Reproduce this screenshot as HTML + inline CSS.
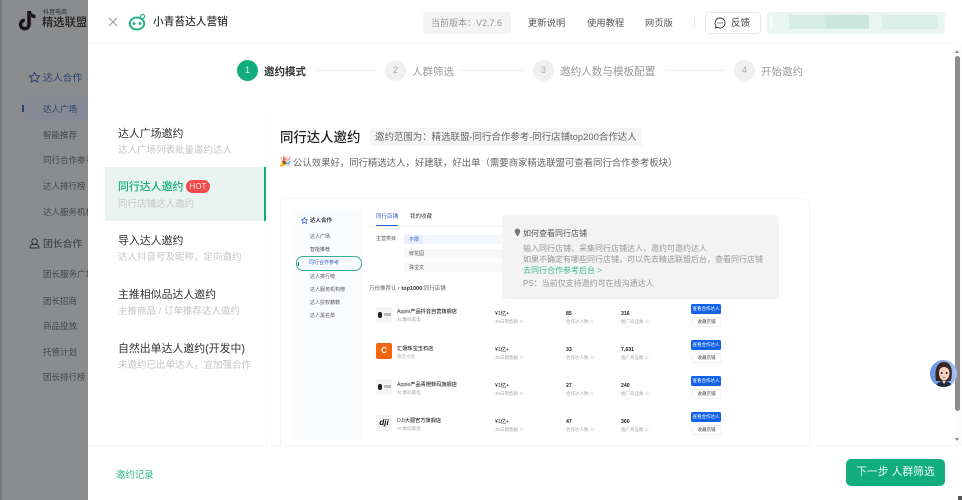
<!DOCTYPE html>
<html lang="zh"><head><meta charset="utf-8">
<style>
*{box-sizing:border-box;margin:0;padding:0}
html,body{width:962px;height:500px;overflow:hidden;background:#8b8c8e}
body{position:relative;font-family:"Liberation Sans","Noto Sans CJK SC",sans-serif;color:#333}
.a,.t{position:absolute}
.t{white-space:nowrap;line-height:1.2}
.nav{font-size:8.5px;color:#45474b}
.blue{color:#2c4170}
.menu{font-size:10.900px;color:#333}
.sub{font-size:9.500px;color:#c4c4c4}
.top{font-size:9.300px;color:#555}
.step{font-size:10.500px;color:#9a9a9a}
.num{width:21px;height:21px;border-radius:50%;background:#f0f0f0;color:#aaa;font-size:9px;text-align:center;line-height:21px}
.line{height:1px;background:#eeeeee}
.m{font-size:5px;color:#555}
.s{font-size:4.500px;color:#aaa}
.b{font-size:5.200px;color:#222;font-weight:bold}
.btn{left:691px;width:30px;height:10px;border-radius:1.500px;background:#1463e6;color:#fff;font-size:4.500px;line-height:10px;text-align:center}
.btn2{left:692px;width:29px;height:10px;border-radius:1.500px;background:#fff;border:1px solid #eee;color:#444;font-size:4.500px;line-height:8px;text-align:center}
.logo{left:376px;width:16px;height:16px;border-radius:2px;background:#f4f4f4}
</style></head>
<body>
<!-- background page -->
<div class="a" style="left:0;top:0;width:88px;height:500px;background:#8b8c8e"></div>
<div class="a" style="left:0;top:0;width:2px;height:500px;background:#77787a"></div>
<svg class="a" style="left:18px;top:9px" width="20" height="23" viewBox="0 0 20 23"><path d="M11 2v13.500a4.200 4.200 0 1 1-4.200-4.200" fill="none" stroke="#16161a" stroke-width="3.500"/><path d="M11 2c.5 3.500 3.500 5.500 6.500 5.500" fill="none" stroke="#16161a" stroke-width="3.500"/><path d="M12.800 4v11.500" stroke="#7d3444" stroke-width=".7"/></svg>
<div class="t" style="left:43px;top:10px;font-size:6px;color:#2a2a2c">抖音电商</div>
<div class="t" style="left:42px;top:17px;font-size:11.300px;color:#222;font-weight:500">精选联盟</div>
<svg class="a" style="left:28px;top:71px" width="13" height="13" viewBox="0 0 13 13"><path d="M6.500 1.500l1.500 3 3.500.5-2.500 2.500.6 3.500-3.100-1.700-3.100 1.700.6-3.500L1.500 5 5 4.500z" fill="none" stroke="#2c4170" stroke-width="1"/></svg>
<div class="t blue" style="left:43px;top:73px;font-size:9.800px">达人合作</div>
<div class="a" style="left:23px;top:97px;width:65px;height:23px;background:#868a94"></div>
<div class="a" style="left:22px;top:105px;width:2px;height:7px;background:#2c4170"></div>
<div class="t blue" style="left:43px;top:104px;font-size:8.500px">达人广场</div>
<div class="t nav" style="left:43px;top:130px">智能推荐</div>
<div class="t nav" style="left:43px;top:155px;width:45px;overflow:hidden">同行合作参考</div>
<div class="t nav" style="left:43px;top:181px">达人排行榜</div>
<div class="t nav" style="left:43px;top:207px;width:45px;overflow:hidden">达人服务机构</div>
<svg class="a" style="left:28px;top:237px" width="13" height="13" viewBox="0 0 13 13"><circle cx="6.500" cy="4.500" r="2.800" fill="none" stroke="#333" stroke-width="1"/><path d="M2 11c0-2 1-3.500 2.500-3.500h4C10 7.500 11 9 11 11z" fill="none" stroke="#333" stroke-width="1"/></svg>
<div class="t" style="left:43px;top:239px;font-size:9.800px;color:#35373a">团长合作</div>
<div class="t nav" style="left:43px;top:269px;width:45px;overflow:hidden">团长服务广场</div>
<div class="t nav" style="left:43px;top:296px">团长招商</div>
<div class="t nav" style="left:43px;top:321px">商品投放</div>
<div class="t nav" style="left:43px;top:347px">托管计划</div>
<div class="t nav" style="left:43px;top:372px">团长排行榜</div>

<!-- drawer -->
<div class="a" style="left:88px;top:0;width:874px;height:500px;background:#fff"></div>
<div class="a" style="left:88px;top:43px;width:874px;height:1px;background:#f5f5f5"></div>

<svg class="a" style="left:107px;top:16px" width="12" height="12" viewBox="0 0 12 12"><path d="M2 2l8 8M10 2l-8 8" stroke="#999" stroke-width="1"/></svg>
<svg class="a" style="left:128px;top:13px" width="19" height="18" viewBox="0 0 19 18"><ellipse cx="9" cy="10.500" rx="7.200" ry="6" fill="#fff" stroke="#25b488" stroke-width="2"/><circle cx="14.500" cy="3.500" r="2" fill="#fff" stroke="#25b488" stroke-width="1.200"/><circle cx="6" cy="10.500" r="1.500" fill="#25b488"/><circle cx="12" cy="10.500" r="1.500" fill="#25b488"/></svg>
<div class="t" style="left:153px;top:16px;font-size:10.700px;color:#333;font-weight:500">小青苔达人营销</div>

<div class="a" style="left:423px;top:12px;width:88px;height:22px;background:#f4f4f4;border-radius:2px"></div>
<div class="t" style="left:431px;top:18px;font-size:9px;color:#999">当前版本：V2.7.6</div>
<div class="t top" style="left:528px;top:18px">更新说明</div>
<div class="t top" style="left:587px;top:18px">使用教程</div>
<div class="t top" style="left:645px;top:18px">网页版</div>
<div class="a" style="left:694px;top:19px;width:1px;height:8px;background:#e5e5e5"></div>
<div class="a" style="left:705px;top:12px;width:56px;height:22px;border:1px solid #e8e8e8;border-radius:4px;background:#fff"></div>
<svg class="a" style="left:714px;top:17px" width="12" height="12" viewBox="0 0 12 12"><path d="M6 1a5 5 0 1 1-2.500 9.300L1.500 11l.6-2A5 5 0 0 1 6 1z" fill="none" stroke="#333" stroke-width=".9"/><circle cx="4" cy="6" r=".6" fill="#333"/><circle cx="6" cy="6" r=".6" fill="#333"/><circle cx="8" cy="6" r=".6" fill="#333"/></svg>
<div class="t" style="left:731px;top:18px;font-size:9.500px;color:#444">反馈</div>
<div class="a" style="left:767px;top:12px;width:178px;height:22px;background:#e9f5f1;border-radius:3px"></div>
<div class="a" style="left:770px;top:15px;width:3px;height:14px;background:#f6fbf9"></div>
<div class="a" style="left:789px;top:15px;width:37px;height:14px;background:#d4ece3"></div>
<div class="a" style="left:826px;top:15px;width:43px;height:14px;background:#c9e7dc"></div>
<div class="a" style="left:882px;top:15px;width:56px;height:14px;background:#daefe8"></div>

<!-- steps -->
<div class="a num" style="left:237px;top:60px;background:#12ad7c;color:#d8f3ea">1</div>
<div class="t" style="left:264px;top:66px;font-size:10.500px;color:#333;font-weight:bold">邀约模式</div>
<div class="a line" style="left:315px;top:70px;width:62px"></div>
<div class="a num" style="left:385px;top:60px">2</div>
<div class="t step" style="left:412px;top:66px">人群筛选</div>
<div class="a line" style="left:460px;top:70px;width:65px"></div>
<div class="a num" style="left:533px;top:60px">3</div>
<div class="t step" style="left:560px;top:66px;font-size:10.600px">邀约人数与模板配置</div>
<div class="a line" style="left:665px;top:70px;width:61px"></div>
<div class="a num" style="left:734px;top:60px">4</div>
<div class="t step" style="left:761px;top:66px">开始邀约</div>

<!-- scrollbar -->
<div class="a" style="left:955px;top:43px;width:7px;height:402px;background:#fbfbfb"></div>
<div class="a" style="left:955px;top:56px;width:5px;height:355px;background:#8d8d8d;border-radius:3px"></div>
<div class="a" style="left:955px;top:50px;width:0;height:0;border-left:2.500px solid transparent;border-right:2.500px solid transparent;border-bottom:3px solid #888"></div>
<div class="a" style="left:955px;top:438px;width:0;height:0;border-left:2.500px solid transparent;border-right:2.500px solid transparent;border-top:3px solid #888"></div>

<!-- left menu -->
<div class="a" style="left:266px;top:110px;width:1px;height:335px;background:#f7f7f7"></div>
<div class="t menu" style="left:118px;top:128px">达人广场邀约</div>
<div class="t sub" style="left:118px;top:145px">达人广场列表批量邀约达人</div>
<div class="a" style="left:105px;top:167px;width:161px;height:54px;background:#e9f4f1"></div>
<div class="a" style="left:264px;top:167px;width:2px;height:54px;background:#12ad7c"></div>
<div class="t menu" style="left:118px;top:181px;color:#12ad7c;font-weight:500">同行达人邀约</div>
<div class="a" style="left:186px;top:180px;width:24px;height:13px;border-radius:7px;background:#f04a4a;color:#fbe3e3;font-size:8px;line-height:13px;text-align:center">HOT</div>
<div class="t sub" style="left:118px;top:199px">同行店铺达人邀约</div>
<div class="t menu" style="left:118px;top:235px">导入达人邀约</div>
<div class="t sub" style="left:118px;top:252px">达人抖音号及昵称，定向邀约</div>
<div class="t menu" style="left:118px;top:289px">主推相似品达人邀约</div>
<div class="t sub" style="left:118px;top:306px">主推商品 / 订单推荐达人邀约</div>
<div class="t menu" style="left:118px;top:343px">自然出单达人邀约(开发中)</div>
<div class="t sub" style="left:118px;top:360px">未邀约已出单达人，宜加强合作</div>

<!-- right head -->
<div class="t" style="left:280px;top:130px;font-size:13.400px;color:#222;font-weight:500">同行达人邀约</div>
<div class="a" style="left:370px;top:128px;width:272px;height:18px;background:#f5f5f5;border-radius:2px"></div>
<div class="t" style="left:375px;top:132px;font-size:9.450px;color:#666">邀约范围为：精选联盟-同行合作参考-同行店铺top200合作达人</div>
<div class="t" style="left:279px;top:157px;font-size:10px;color:#e9a24a">🎉</div>
<div class="t" style="left:293px;top:157px;font-size:9.400px;color:#666">公认效果好，同行精选达人，好建联，好出单（需要商家精选联盟可查看同行合作参考板块）</div>

<!-- mock image -->
<div class="a" style="left:280px;top:198px;width:530px;height:247px;background:#fff;border:1px solid #f5f5f5;border-bottom:0;border-radius:5px 5px 0 0"></div>
<div class="a" style="left:294px;top:209px;width:69px;height:231px;background:#fafbfd"></div>
<div class="a" style="left:368px;top:279px;width:140px;height:20px;background:#fff"></div>
<svg class="a" style="left:301px;top:217px" width="7" height="7" viewBox="0 0 7 7"><path d="M3.500.5l.9 2 2.100.3-1.500 1.500.4 2.100-1.900-1-1.900 1 .4-2.100L.5 2.800l2.100-.3z" fill="none" stroke="#2a62d0" stroke-width=".7"/></svg>
<div class="t" style="left:310px;top:218px;font-size:5.500px;color:#3a3f4a;font-weight:bold">达人合作</div>
<div class="t m" style="left:310px;top:234px">达人广场</div>
<div class="t m" style="left:310px;top:247px">智能推荐</div>
<div class="a" style="left:296px;top:256px;width:66px;height:15px;border:1px solid #3bb298;border-radius:7px"></div>
<div class="a" style="left:298px;top:262px;width:1px;height:4px;background:#1463e6"></div>
<div class="t" style="left:309px;top:260px;font-size:5px;color:#2a62d0">同行合作参考</div>
<div class="t m" style="left:310px;top:274px">达人排行榜</div>
<div class="t m" style="left:310px;top:287px">达人服务机构榜</div>
<div class="t m" style="left:310px;top:300px">达人授权籍籍</div>
<div class="t m" style="left:310px;top:313px">达人黑名单</div>

<div class="t" style="left:376px;top:214px;font-size:5.500px;color:#2a62d0">同行店铺</div>
<div class="a" style="left:376px;top:225px;width:22px;height:1px;background:#2a62d0"></div>
<div class="t" style="left:410px;top:214px;font-size:5.500px;color:#444">我的收藏</div>
<div class="a" style="left:368px;top:226px;width:135px;height:1px;background:#f2f2f2"></div>
<div class="t m" style="left:376px;top:236px">主营类目</div>
<div class="a" style="left:404px;top:235px;width:100px;height:9px;background:#f4f7fc"></div>
<div class="a" style="left:404px;top:235px;width:19px;height:9px;background:#e9f0fc"></div>
<div class="t m" style="left:409px;top:237px;color:#2a62d0">不限</div>
<div class="a" style="left:404px;top:249px;width:100px;height:9px;background:#f8f8f8"></div>
<div class="t m" style="left:409px;top:251px">鲜花园</div>
<div class="a" style="left:404px;top:263px;width:100px;height:9px;background:#f8f8f8"></div>
<div class="t m" style="left:409px;top:265px">珠宝文</div>
<div class="t" style="left:369px;top:286px;font-size:5.500px;color:#666">万份推荐认   r <b style="color:#333">top1000</b> 同行店铺</div>

<!-- popup -->
<div class="a" style="left:502px;top:215px;width:277px;height:84px;background:#f3f3f3;border-radius:4px"></div>
<svg class="a" style="left:514px;top:228px" width="7" height="9" viewBox="0 0 7 9"><path d="M3.500.5a2.700 2.700 0 0 1 2.700 2.700C6.200 5 3.500 8.500 3.500 8.500S.8 5 .8 3.200A2.700 2.700 0 0 1 3.500.5z" fill="#777"/></svg>
<div class="t" style="left:523px;top:229px;font-size:8px;color:#555">如何查看同行店铺</div>
<div class="t" style="left:523px;top:244px;font-size:8px;color:#999">输入同行店铺，采集同行店铺达人，邀约可邀约达人</div>
<div class="t" style="left:523px;top:255px;font-size:8px;color:#999">如果不确定有哪些同行店铺，可以先去精选联盟后台，查看同行店铺</div>
<div class="t" style="left:523px;top:266px;font-size:8px;color:#3ebb93">去同行合作参考后台 &gt;</div>
<div class="t" style="left:523px;top:279px;font-size:8px;color:#999">PS：当前仅支持邀约可在线沟通达人</div>

<!-- row 1 -->
<div class="a logo" style="top:307px"></div>
<div class="a" style="left:378px;top:312px;width:4px;height:6px;background:#222;border-radius:2px"></div>
<div class="a" style="left:384px;top:313px;width:7px;height:3px;background:#bbb"></div>
<div class="t b" style="left:397px;top:309px;font-weight:500;color:#333">Apple产品抖音自营旗舰店</div>
<div class="t s" style="left:397px;top:317px">3C数码家电</div>
<div class="t b" style="left:495px;top:311px;font-weight:500">¥1亿+</div>
<div class="t s" style="left:495px;top:319px">30日销售额 ☉</div>
<div class="t b" style="left:566px;top:311px">85</div>
<div class="t s" style="left:566px;top:319px">合作达人数 ☉</div>
<div class="t b" style="left:621px;top:311px">316</div>
<div class="t s" style="left:621px;top:319px">推广商品数 ☉</div>
<div class="a btn" style="top:304px">查看合作达人</div>
<div class="a btn2" style="top:317px">收藏店铺</div>
<!-- row 2 -->
<div class="a logo" style="top:343px;background:#f5670f;color:#fff;font-size:8px;font-weight:bold;line-height:16px;text-align:center">C</div>
<div class="t b" style="left:397px;top:346px;font-weight:500;color:#333">汇饿珠宝玉石店</div>
<div class="t s" style="left:397px;top:354px">珠宝文玩</div>
<div class="t b" style="left:495px;top:347px;font-weight:500">¥1亿+</div>
<div class="t s" style="left:495px;top:355px">30日销售额 ☉</div>
<div class="t b" style="left:566px;top:347px">33</div>
<div class="t s" style="left:566px;top:355px">合作达人数 ☉</div>
<div class="t b" style="left:621px;top:347px">7,631</div>
<div class="t s" style="left:621px;top:355px">推广商品数 ☉</div>
<div class="a btn" style="top:340px">查看合作达人</div>
<div class="a btn2" style="top:353px">收藏店铺</div>
<!-- row 3 -->
<div class="a logo" style="top:379px"></div>
<div class="a" style="left:378px;top:384px;width:4px;height:6px;background:#222;border-radius:2px"></div>
<div class="a" style="left:384px;top:385px;width:7px;height:3px;background:#bbb"></div>
<div class="t b" style="left:397px;top:382px;font-weight:500;color:#333">Apple产品青橙数码旗舰店</div>
<div class="t s" style="left:397px;top:390px">3C数码家电</div>
<div class="t b" style="left:495px;top:383px;font-weight:500">¥1亿+</div>
<div class="t s" style="left:495px;top:391px">30日销售额 ☉</div>
<div class="t b" style="left:566px;top:383px">27</div>
<div class="t s" style="left:566px;top:391px">合作达人数 ☉</div>
<div class="t b" style="left:621px;top:383px">240</div>
<div class="t s" style="left:621px;top:391px">推广商品数 ☉</div>
<div class="a btn" style="top:376px">查看合作达人</div>
<div class="a btn2" style="top:389px">收藏店铺</div>
<!-- row 4 -->
<div class="a logo" style="top:415px;color:#111;font-size:8px;font-weight:bold;font-style:italic;line-height:16px;text-align:center">dji</div>
<div class="t b" style="left:397px;top:418px;font-weight:500;color:#333">DJI大疆官方旗舰店</div>
<div class="t s" style="left:397px;top:426px">3C数码家电</div>
<div class="t b" style="left:495px;top:419px;font-weight:500">¥1亿+</div>
<div class="t s" style="left:495px;top:427px">30日销售额 ☉</div>
<div class="t b" style="left:566px;top:419px">47</div>
<div class="t s" style="left:566px;top:427px">合作达人数 ☉</div>
<div class="t b" style="left:621px;top:419px">360</div>
<div class="t s" style="left:621px;top:427px">推广商品数 ☉</div>
<div class="a btn" style="top:412px">查看合作达人</div>
<div class="a btn2" style="top:425px">收藏店铺</div>

<!-- avatar -->
<svg class="a" style="left:929px;top:359px" width="29" height="29" viewBox="0 0 29 29"><defs><clipPath id="c"><circle cx="14.500" cy="14.500" r="13.500"/></clipPath><linearGradient id="g" x1="0" y1="0" x2="1" y2="0"><stop offset="0" stop-color="#5f8fe6"/><stop offset="1" stop-color="#a9c6f3"/></linearGradient></defs><g clip-path="url(#c)"><rect width="29" height="29" fill="url(#g)"/><path d="M7 22C5 11 8 3 15 3c6 0 9 6 7.500 16l-1 3z" fill="#3a2620"/><path d="M10 14c0-4 2-6 5-6s5.500 2 5.500 6c0 4-2.500 7.500-5.500 7.500S10 18 10 14z" fill="#f3d2c4"/><circle cx="12.700" cy="14" r="1" fill="#2a1a18"/><circle cx="17.700" cy="14" r="1" fill="#2a1a18"/><path d="M14 18.300h2.500" stroke="#c4525c" stroke-width=".8"/><path d="M6 29c1-5 5-7 9-7s8 2 9 7z" fill="#1f2a3f"/><path d="M13 22l2 3 2-3z" fill="#f3d2c4"/></g></svg>

<!-- footer -->
<div class="a" style="left:88px;top:445px;width:874px;height:1px;background:#f5f5f5"></div>
<div class="t" style="left:116px;top:469px;font-size:9.400px;color:#2fb58b">邀约记录</div>
<div class="a" style="left:846px;top:459px;width:99px;height:27px;border-radius:5px;background:#12ad7c;color:#eafaf4;font-size:10.800px;line-height:27px;text-align:center">下一步 人群筛选</div>
<div class="a" style="left:958px;top:496px;width:4px;height:4px;background:#555"></div>
</body></html>
